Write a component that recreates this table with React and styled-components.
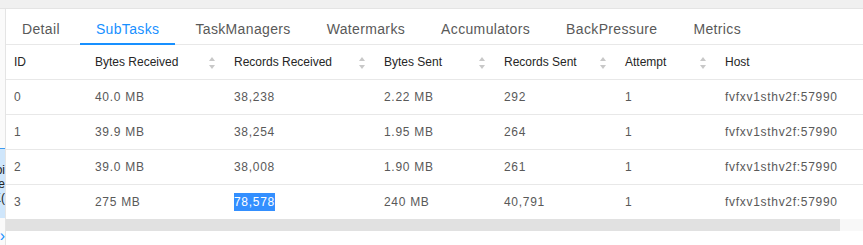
import React from "react"
import styled, { createGlobalStyle } from "styled-components"

const tabs = ["Detail", "SubTasks", "TaskManagers", "Watermarks", "Accumulators", "BackPressure", "Metrics"]

const columns = [
    { title: "ID", width: 81 },
    { title: "Bytes Received", width: 139, sort: true },
    { title: "Records Received", width: 150, sort: true },
    { title: "Bytes Sent", width: 120, sort: true },
    { title: "Records Sent", width: 121, sort: true },
    { title: "Attempt", width: 100, sort: true },
    { title: "Host", width: 168 },
]

const tableWidth = columns.reduce((s, c) => s + c.width, 0)

const rows = [
    ["0", "40.0 MB", "38,238", "2.22 MB", "292", "1", "fvfxv1sthv2f:57990"],
    ["1", "39.9 MB", "38,254", "1.95 MB", "264", "1", "fvfxv1sthv2f:57990"],
    ["2", "39.0 MB", "38,008", "1.90 MB", "261", "1", "fvfxv1sthv2f:57990"],
    ["3", "275 MB", "78,578", "240 MB", "40,791", "1", "fvfxv1sthv2f:57990"],
]

export default function App() {
    return (
        <>
            <GlobalStyle />
            <Page>
                <TopStrip />
                <Body>
                    <Gutter>
                        <GutterCard>
                            <span>oi</span>
                            <span>e</span>
                            <span>K(</span>
                        </GutterCard>
                        <GutterArrow>›</GutterArrow>
                    </Gutter>
                    <Panel>
                        <TabBar>
                            {tabs.map((t) => (
                                <Tab key={t} active={t === "SubTasks"}>{t}</Tab>
                            ))}
                        </TabBar>
                        <TableScroll>
                            <Table style={{ width: tableWidth }}>
                                <colgroup>
                                    {columns.map((c) => <col key={c.title} style={{ width: c.width }} />)}
                                </colgroup>
                                <thead>
                                    <tr>
                                        {columns.map((c) => (
                                            <Th key={c.title}>
                                                <HeadInner>
                                                    <span>{c.title}</span>
                                                    {c.sort && (
                                                        <Sorter>
                                                            <Up />
                                                            <Down />
                                                        </Sorter>
                                                    )}
                                                </HeadInner>
                                            </Th>
                                        ))}
                                    </tr>
                                </thead>
                                <tbody>
                                    {rows.map((r, i) => (
                                        <Tr key={i} last={i === rows.length - 1}>
                                            {r.map((v, j) => (
                                                <Td key={j}>
                                                    {i === 3 && j === 2 ? <Selected>{v}</Selected> : v}
                                                </Td>
                                            ))}
                                        </Tr>
                                    ))}
                                </tbody>
                            </Table>
                        </TableScroll>
                        <ScrollBar>
                            <Thumb />
                        </ScrollBar>
                    </Panel>
                </Body>
            </Page>
        </>
    )
}

const GlobalStyle = createGlobalStyle`
    body{
    margin: 0;
    background: #ffffff;
    font-family: "Liberation Sans", Arial, sans-serif;
    }
`
const Page = styled.div`
    width: 863px;
    height: 245px;
    overflow: hidden;
    display: flex;
    flex-direction: column;
`
const TopStrip = styled.div`
    height: 8px;
    background-color: #f0f0f0;
    border-bottom: 1px solid #e4e4e4;
`
const Body = styled.div`
    flex: 1;
    display: flex;
`
const Gutter = styled.div`
    width: 6px;
    border-right: 1px solid #e4e4e4;
    background-color: #fafafa;
    display: flex;
    flex-direction: column;
    padding-top: 139px;
    box-sizing: border-box;
`
const GutterCard = styled.div`
    height: 70px;
    background-color: #cfe6fb;
    border-top: 1px solid #3d9bf0;
    display: flex;
    flex-direction: column;
    align-items: flex-end;
    justify-content: flex-end;
    padding-bottom: 13px;
    box-sizing: border-box;
    overflow: hidden;

    span{
    font-size: 12px;
    line-height: 14px;
    color: #222;
    white-space: nowrap;
    }
`
const GutterArrow = styled.div`
    margin-top: 12px;
    color: #1890ff;
    font-size: 16px;
    line-height: 12px;
    overflow: hidden;
    display: flex;
    justify-content: flex-end;
`
const Panel = styled.div`
    flex: 1;
    min-width: 0;
    display: flex;
    flex-direction: column;
    overflow: hidden;
`
const TabBar = styled.div`
    height: 35px;
    display: flex;
    border-bottom: 1px solid #e8e8e8;
    flex-shrink: 0;
`
const Tab = styled.div`
    position: relative;
    padding: 9px 16px 0 16px;
    margin-right: 4px;
    font-size: 14px;
    line-height: 22px;
    letter-spacing: 0.35px;
    color: ${(p) => (p.active ? "#1890ff" : "#595959")};
    white-space: nowrap;

    &::after{
    content: "";
    position: absolute;
    left: 0;
    right: 0;
    bottom: -1px;
    height: 2px;
    background-color: ${(p) => (p.active ? "#1890ff" : "transparent")};
    }
`
const TableScroll = styled.div`
    overflow: hidden;
`
const Table = styled.table`
    table-layout: fixed;
    border-collapse: collapse;
    font-size: 12px;
`
const Th = styled.th`
    height: 34px;
    padding: 0 10px 0 8px;
    text-align: left;
    font-weight: 400;
    color: #262626;
    border-bottom: 1px solid #e8e8e8;
    background-color: #ffffff;
`
const HeadInner = styled.div`
    display: flex;
    align-items: center;
    justify-content: space-between;
`
const Sorter = styled.div`
    display: flex;
    flex-direction: column;
    align-items: center;
    gap: 4px;
    width: 8px;
    margin-top: 1px;
`
const Up = styled.div`
    width: 0;
    height: 0;
    border-left: 3.5px solid transparent;
    border-right: 3.5px solid transparent;
    border-bottom: 4px solid #c8c8c8;
`
const Down = styled.div`
    width: 0;
    height: 0;
    border-left: 3.5px solid transparent;
    border-right: 3.5px solid transparent;
    border-top: 4px solid #c8c8c8;
`
const Tr = styled.tr`
    td{
    border-bottom: ${(p) => (p.last ? "none" : "1px solid #e8e8e8")};
    }
`
const Td = styled.td`
    height: 34px;
    padding: 0 8px;
    color: #595959;
    letter-spacing: 0.7px;
    white-space: nowrap;
`
const Selected = styled.span`
    background-color: #338fff;
    color: #ffffff;
    padding: 2px 0;
`
const ScrollBar = styled.div`
    height: 12px;
    background-color: #f8f8f8;
    flex-shrink: 0;
`
const Thumb = styled.div`
    width: 834px;
    height: 100%;
    background-color: #e1e1e1;
`
